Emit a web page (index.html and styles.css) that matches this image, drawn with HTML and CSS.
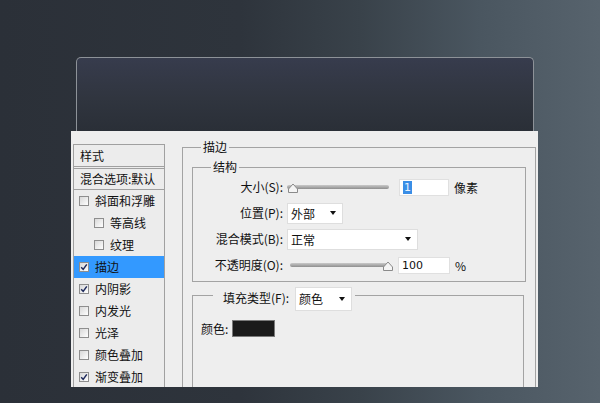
FILE: index.html
```html
<!DOCTYPE html>
<html lang="zh">
<head>
<meta charset="utf-8">
<title>图层样式</title>
<link rel="stylesheet" href="styles.css">
</head>
<body>
<div class="stage">
  <div class="panel"></div>
  <div class="dialog">
    <ul class="styles">
      <li class="head">样式</li>
      <li class="blend">混合选项:默认</li>
      <li class="item"><span class="cb"></span>斜面和浮雕</li>
      <li class="item sub"><span class="cb"></span>等高线</li>
      <li class="item sub"><span class="cb"></span>纹理</li>
      <li class="item on"><span class="cb"><svg viewBox="0 0 8 8" width="8" height="8"><path d="M1.2 4.2 L3.2 6.4 L6.8 1.4" fill="none" stroke="#1e2a5c" stroke-width="1.5"/></svg></span>描边</li>
      <li class="item"><span class="cb"><svg viewBox="0 0 8 8" width="8" height="8"><path d="M1.2 4.2 L3.2 6.4 L6.8 1.4" fill="none" stroke="#1e2a5c" stroke-width="1.5"/></svg></span>内阴影</li>
      <li class="item"><span class="cb"></span>内发光</li>
      <li class="item"><span class="cb"></span>光泽</li>
      <li class="item"><span class="cb"></span>颜色叠加</li>
      <li class="item"><span class="cb"><svg viewBox="0 0 8 8" width="8" height="8"><path d="M1.2 4.2 L3.2 6.4 L6.8 1.4" fill="none" stroke="#1e2a5c" stroke-width="1.5"/></svg></span>渐变叠加</li>
    </ul>
    <div class="main">
      <fieldset class="stroke">
        <legend>描边</legend>
        <fieldset class="struct">
          <legend>结构</legend>
          <div class="rows">
            <label class="lbl">大小(S):</label>
            <div class="ctl">
              <div class="slider w102">
                <div class="track"></div>
                <svg class="thumb start" viewBox="0 0 10 10" width="10" height="10"><path d="M0.5 9.5 L0.5 6 L5 1 L9.5 6 L9.5 9.5 Z" fill="#f4f4f4" stroke="#8a8a8a"/></svg>
              </div>
              <div class="field gap10"><span class="sel">1</span></div>
              <span class="unit">像素</span>
            </div>

            <label class="lbl">位置(P):</label>
            <div class="ctl">
              <div class="select w56"><span>外部</span><i class="arrow"></i></div>
            </div>

            <label class="lbl">混合模式(B):</label>
            <div class="ctl">
              <div class="select w131"><span>正常</span><i class="arrow"></i></div>
            </div>

            <label class="lbl">不透明度(O):</label>
            <div class="ctl">
              <div class="slider w100 off3">
                <div class="track"></div>
                <svg class="thumb end" viewBox="0 0 10 10" width="10" height="10"><path d="M0.5 9.5 L0.5 6 L5 1 L9.5 6 L9.5 9.5 Z" fill="#f4f4f4" stroke="#8a8a8a"/></svg>
              </div>
              <div class="field gap8 w52">100</div>
              <span class="unit">%</span>
            </div>
          </div>
        </fieldset>
        <fieldset class="fill">
          <legend><label class="filllbl">填充类型(F):</label><div class="select w57 tall"><span>颜色</span><i class="arrow"></i></div></legend>
          <div class="color-row"><span>颜色:</span><span class="swatch"></span></div>
        </fieldset>
      </fieldset>
    </div>
  </div>
</div>
</body>
</html>
```

FILE: styles.css
```css
* { box-sizing: border-box; }
html, body { margin: 0; padding: 0; }
body {
  width: 600px;
  height: 403px;
  overflow: hidden;
  background: linear-gradient(90deg, #2b3038 0%, #2e343c 40%, #39424a 60%, #4a5660 80%, #57636d 100%);
  font-family: "Noto Sans CJK SC", "Noto Sans", sans-serif;
  font-size: 12px;
  color: #111;
}
.stage { padding-top: 57px; }
.panel {
  margin-left: 76px;
  width: 458px;
  height: 74px;
  border: 1px solid #8d9298;
  border-bottom: 0;
  border-radius: 5px 5px 0 0;
  background: linear-gradient(180deg, #373c4d 0%, #30353f 55%, #2a2f37 100%);
}
.dialog {
  margin-left: 71px;
  width: 467px;
  height: 256px;
  background: #eeeeee;
  display: flex;
  overflow: hidden;
}

/* sidebar */
.styles {
  list-style: none;
  margin: 13px 0 0 2px;
  padding: 0;
  width: 92px;
  flex: none;
  border: 1px solid #a0a0a0;
  border-bottom: 0;
  background: #ececec;
}
.styles li {
  height: 22px;
  display: flex;
  align-items: center;
  white-space: nowrap;
  line-height: 16px;
}
.head { border-bottom: 1px solid #a0a0a0; padding-left: 6px; }
.blend {
  margin-top: 1px;
  border-top: 1px solid #a0a0a0;
  border-bottom: 1px solid #a0a0a0;
  padding-left: 6px;
}
.item { padding-left: 5px; }
.item.sub { padding-left: 20px; }
.item.on { background: #3399ff; }
.cb {
  width: 10px;
  height: 10px;
  margin-right: 6px;
  border: 1px solid #8e8e8e;
  background: linear-gradient(135deg, #d8d8d8, #ffffff);
  display: flex;
  align-items: center;
  justify-content: center;
  flex: none;
}
.cb svg { display: block; }

/* main */
.main { flex: 1; padding: 9px 2px 0 17px; }
fieldset {
  margin: 0;
  border: 1px solid #a3a3a3;
  min-width: 0;
}
legend { padding: 0 2px; line-height: 14px; }
.stroke { padding: 0 9px; height: 260px; }
.stroke > legend { margin-left: 9px; }
.struct { margin: 6px 0 0 0; padding: 2px 0 5px; }
.struct > legend { margin-left: 18px; }
.rows {
  display: grid;
  grid-template-columns: 90px auto;
  column-gap: 4px;
  grid-auto-rows: 22px;
  row-gap: 4px;
}
.lbl {
  text-align: right;
  line-height: 22px;
  white-space: nowrap;
}
.ctl { display: flex; align-items: center; }

.slider { position: relative; height: 22px; flex: none; }
.w102 { width: 102px; }
.w100 { width: 100px; }
.off3 { margin-left: 3px; }
.track {
  margin-top: 9px;
  height: 4px;
  border-radius: 2px;
  background: linear-gradient(180deg, #c9c9c9, #8e8e8e);
}
.thumb { position: absolute; top: 7px; display: block; }
.thumb.start { left: 1px; }
.thumb.end { right: -3px; }

.field {
  width: 50px;
  height: 17px;
  background: #fff;
  border: 1px solid #e0e0e0;
  padding-left: 3px;
  line-height: 15px;
  font-family: "DejaVu Sans", sans-serif;
  font-size: 11px;
  flex: none;
}
.gap10 { margin-left: 10px; }
.gap8 { margin-left: 8px; }
.w52 { width: 52px; }
.sel { background: #3a8ee6; color: #e8f2ff; padding: 0 1px; }
.unit { margin-left: 5px; }

.select {
  height: 21px;
  background: #fff;
  border: 1px solid #dedede;
  display: flex;
  align-items: center;
  justify-content: space-between;
  padding: 0 6px 0 3px;
  flex: none;
}
.w56 { width: 56px; }
.w57 { width: 57px; }
.w131 { width: 131px; }
.arrow {
  width: 0;
  height: 0;
  border-left: 3.5px solid transparent;
  border-right: 3.5px solid transparent;
  border-top: 4px solid #111;
}

.fill { margin: 5px 2px 0 0; padding: 0 8px; height: 200px; }
.fill > legend {
  margin-left: 12px;
  padding: 0 3px 0 10px;
  display: flex;
  align-items: flex-start;
  height: 16px;
}
.filllbl { line-height: 16px; margin-top: 3px; white-space: nowrap; }
.select.tall { height: 24px; margin-left: 6px; }
.color-row {
  display: flex;
  align-items: center;
  margin-top: 17px;
  height: 17px;
}
.swatch {
  width: 43px;
  height: 17px;
  margin-left: 4px;
  background: #1b1b1b;
  border: 1px solid #7a7a7a;
}
```
